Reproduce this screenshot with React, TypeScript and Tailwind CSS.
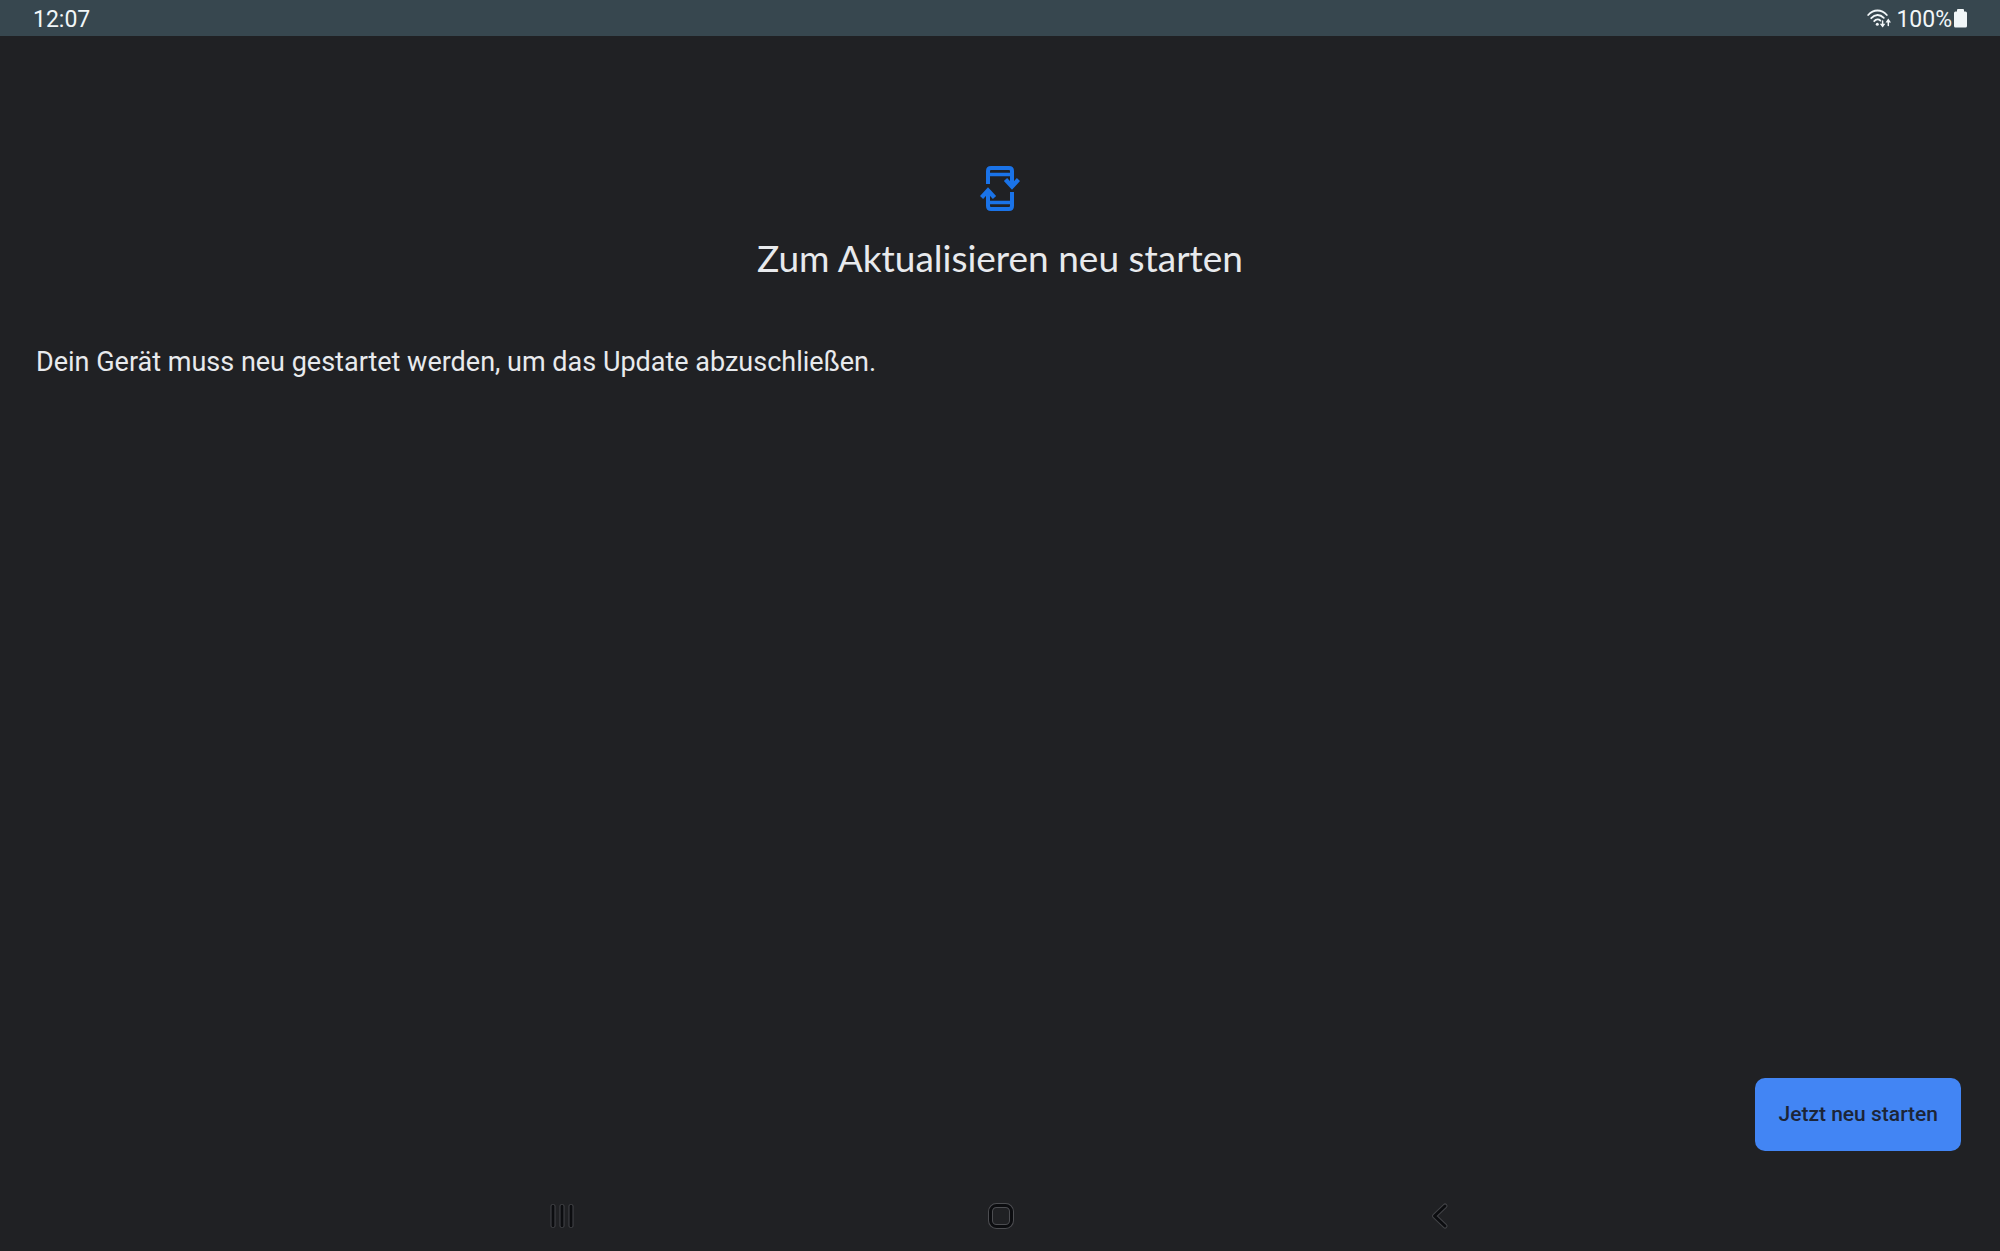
const WifiIcon = () => {
    return (
        <svg width="24" height="20" viewBox="0 0 24 20" fill="none" stroke="#f1f6f8" strokeWidth="1.8" strokeLinecap="round" aria-hidden="true">
            <path d="M1.2 6C6.5 0 14.5 0 19.8 6" />
            <path d="M4.2 9.2C8 5 13 5 16.8 8.8" />
            <path d="M7.2 12.2C9.2 10 11.8 10 13.4 11.6" />
            <circle cx="10.3" cy="15.2" r="1.5" fill="#f1f6f8" stroke="none" />
            <path d="M15.6 12v5M21.3 16.5v-5" strokeWidth="1.5" />
            <path d="M12.8 14.8h5.6l-2.8 3.8zM18.5 13.4H24l-2.7-3.8z" fill="#f1f6f8" stroke="none" />
        </svg>
    )
}

const BatteryIcon = () => {
    return (
        <svg width="13" height="20" viewBox="0 0 13 20" fill="#f1f6f8" aria-hidden="true">
            <path d="M3 1q0-1 1-1h5q1 0 1 1v1.500h1.500Q13 2.500 13 4v13q0 1.500-1.500 1.500h-10Q0 18.500 0 17V4q0-1.500 1.500-1.500H3z" />
        </svg>
    )
}

const UpdateIcon = () => {
    return (
        <svg width="40" height="46" viewBox="0 0 40 46" fill="none" stroke="#1a73e8" strokeWidth="4" aria-hidden="true">
            <path d="M8 18V5q0-3 3-3h18q3 0 3 3v16" />
            <path d="M8 8.5h24" strokeWidth="3.5" />
            <path d="m25.500 13.500 6.500 7 6.500-7" strokeWidth="4.4" />
            <path d="M32 26v14q0 3-3 3H11q-3 0-3-3V25" />
            <path d="M8 36.500h24" strokeWidth="3.500" />
            <path d="m1.500 31.500 6.500-7 6.500 7" strokeWidth="4.4" />
        </svg>
    )
}

const RecentsIcon = () => {
    return (
        <svg width="28" height="28" viewBox="0 0 28 28" fill="#0c0d10" stroke="#434448" aria-hidden="true">
            <rect x="3" y="2.5" width="4" height="23" rx="1.5" />
            <rect x="12" y="2.5" width="4" height="23" rx="1.5" />
            <rect x="21" y="2.5" width="4" height="23" rx="1.5" />
        </svg>
    )
}

const HomeIcon = () => {
    return (
        <svg width="28" height="28" viewBox="0 0 28 28" fill="none" aria-hidden="true">
            <rect x="3.5" y="3.5" width="21" height="21" rx="6" stroke="#4c4d51" strokeWidth="5" />
            <rect x="3.5" y="3.5" width="21" height="21" rx="6" stroke="#0c0d10" strokeWidth="3" />
        </svg>
    )
}

const BackIcon = () => {
    return (
        <svg width="28" height="28" viewBox="0 0 28 28" fill="none" strokeLinecap="round" strokeLinejoin="round" aria-hidden="true">
            <path d="M19 4 8.5 14 19 24" stroke="#434448" strokeWidth="5" />
            <path d="M19 4 8.5 14 19 24" stroke="#0c0d10" strokeWidth="3" />
        </svg>
    )
}

const App = () => {
    return (
        <div className="flex min-h-screen flex-col bg-[#202124] font-[Roboto,sans-serif] text-[#e8eaed]">
            <header className="flex h-9 items-center justify-between bg-[#37474f] px-[33px] pt-[2px] text-[23px] leading-8 text-[#f1f6f8]">
                <span className="pt-[2px]">12:07</span>
                <div className="flex items-center">
                    <WifiIcon />
                    <span className="pt-[2px] pr-[2px] pl-[5px]">100%</span>
                    <BatteryIcon />
                </div>
            </header>

            <main className="flex grow flex-col px-9 pt-[130px]">
                <div className="flex flex-col items-center gap-[22px]">
                    <UpdateIcon />
                    <h1 className="font-[Lato,sans-serif] text-[37px] leading-12">Zum Aktualisieren neu starten</h1>
                </div>
                <p className="pt-[60px] text-[27px] leading-10">
                    Dein Gerät muss neu gestartet werden, um das Update abzuschließen.
                </p>
                <div className="mt-auto flex justify-end pr-[3px] pb-[30px]">
                    <button className="h-[73px] rounded-[10px] bg-[#4285f4] px-[23px] text-[21px] font-medium text-[#1c2538]">
                        Jetzt neu starten
                    </button>
                </div>
            </main>

            <nav className="flex h-[70px] items-center justify-center gap-[411px] pl-[2px]">
                <button aria-label="Letzte Apps">
                    <RecentsIcon />
                </button>
                <button aria-label="Startbildschirm">
                    <HomeIcon />
                </button>
                <button aria-label="Zurück">
                    <BackIcon />
                </button>
            </nav>
        </div>
    )
}

export default App
